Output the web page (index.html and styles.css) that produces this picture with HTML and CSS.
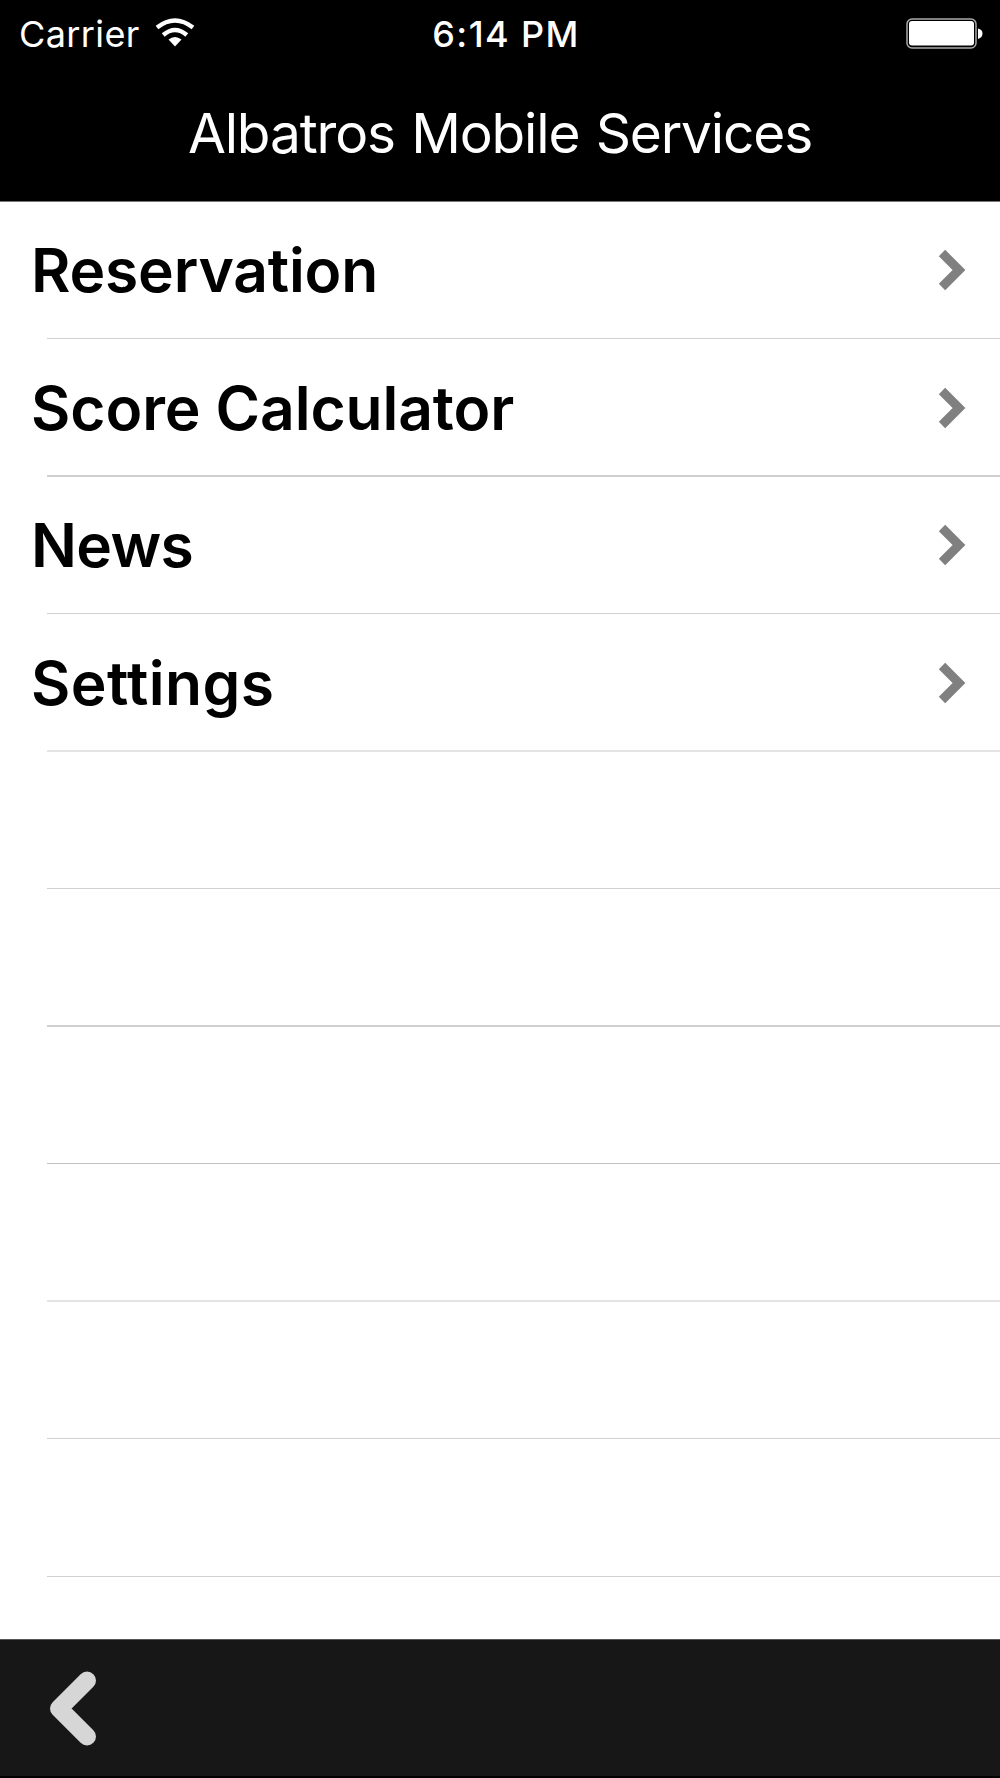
FILE: index.html
```html
<!DOCTYPE html>
<html lang="en">
<head>
<meta charset="utf-8">
<title>Albatros Mobile Services</title>
<link rel="stylesheet" href="styles.css">
</head>
<body>
<header class="header">
  <div class="status">
    <div class="carrier"><span class="carrier-name">Carrier</span>
      <svg class="wifi" width="40" height="30" viewBox="0 0 40 30" fill="none" stroke="#fff" stroke-width="4.300"><path d="M2 9.500Q20 -4.500 38 9.500M8.200 17Q20 6.800 31.800 17"/><path d="M13.500 21.500Q20 16.500 26.500 21.500L20 28.500Z" fill="#fff" stroke="none"/></svg>
    </div>
    <time class="time">6:14 PM</time>
    <svg class="battery" width="77" height="32" viewBox="0 0 77 32"><rect x="1" y="1" width="69" height="29" rx="5" fill="none" stroke="#aaa" stroke-width="1.500"/><rect x="3" y="3" width="65" height="24.500" rx="3" fill="#fff"/><path d="M72 10.500Q76.500 11.500 76.500 15.500T72 21Z" fill="#fff"/></svg>
  </div>
  <h1 class="title">Albatros Mobile Services</h1>
</header>
<main class="list">
  <a class="row"><span class="label reservation">Reservation</span><svg class="chevron" width="28" height="42" viewBox="0 0 28 42"><path d="M4 4L21 21L4 38" fill="none" stroke="#808080" stroke-width="9"/></svg></a>
  <a class="row tall double"><span class="label calculator">Score Calculator</span><svg class="chevron" width="28" height="42" viewBox="0 0 28 42"><path d="M4 4L21 21L4 38" fill="none" stroke="#808080" stroke-width="9"/></svg></a>
  <a class="row"><span class="label news">News</span><svg class="chevron" width="28" height="42" viewBox="0 0 28 42"><path d="M4 4L21 21L4 38" fill="none" stroke="#808080" stroke-width="9"/></svg></a>
  <a class="row tall faint"><span class="label settings">Settings</span><svg class="chevron" width="28" height="42" viewBox="0 0 28 42"><path d="M4 4L21 21L4 38" fill="none" stroke="#808080" stroke-width="9"/></svg></a>
  <div class="row"></div>
  <div class="row tall double"></div>
  <div class="row dark"></div>
  <div class="row tall faint"></div>
  <div class="row"></div>
  <div class="row tall"></div>
</main>
<footer class="toolbar">
  <svg class="back" width="48" height="76" viewBox="0 0 48 76"><path d="M39 10.500L11 38.500L39 66.500" fill="none" stroke="#d6d6d6" stroke-width="18" stroke-linecap="round" stroke-linejoin="round"/></svg>
</footer>
</body>
</html>
```
FILE: styles.css
```css
* { box-sizing: border-box; }
body { margin: 0; height: 1778px; display: flex; flex-direction: column; overflow: hidden; background: #fff; font-family: Inter, sans-serif; }
.header { height: 202px; background: #000; color: #fff; flex: none; border-bottom: 1px solid #777; }
.status { height: 67px; display: grid; grid-template-columns: 1fr auto 1fr; align-items: center; padding: 0 17px 0 19px; font-size: 36px; }
.carrier { display: flex; align-items: center; gap: 15px; letter-spacing: 0.4px; }
.wifi { margin-top: -1px; }
.time { font-weight: 550; letter-spacing: 1.4px; padding-left: 10px; }
.battery { justify-self: end; }
.title { margin: 0; height: 132px; display: flex; justify-content: center; align-items: center; font-size: 55px; font-weight: 400; letter-spacing: -1.15px; word-spacing: 2px; }
.list { flex: 1; overflow: hidden; }
.row { --line: #d0d0d2; height: 137px; display: flex; align-items: center; justify-content: space-between; padding: 0 34px 1px 31px; background: linear-gradient(var(--line), var(--line)) 47px 100% / 100% 1px no-repeat; }
.tall { height: 138px; }
.double { background-size: 100% 2px; }
.faint { --line: #e4e4e5; background-size: 100% 2px; }
.dark { --line: #c0c0c4; }
.label { font-size: 60.5px; font-weight: 600; }
.reservation { letter-spacing: -0.2px; }
.calculator { letter-spacing: -0.1px; }
.news { letter-spacing: -0.7px; }
.settings { letter-spacing: 0.45px; }
.toolbar { height: 139px; flex: none; background: #171717; border-top: 1px solid #555; border-bottom: 2px solid #000; padding: 30px 48px; }
.back { display: block; }
```
